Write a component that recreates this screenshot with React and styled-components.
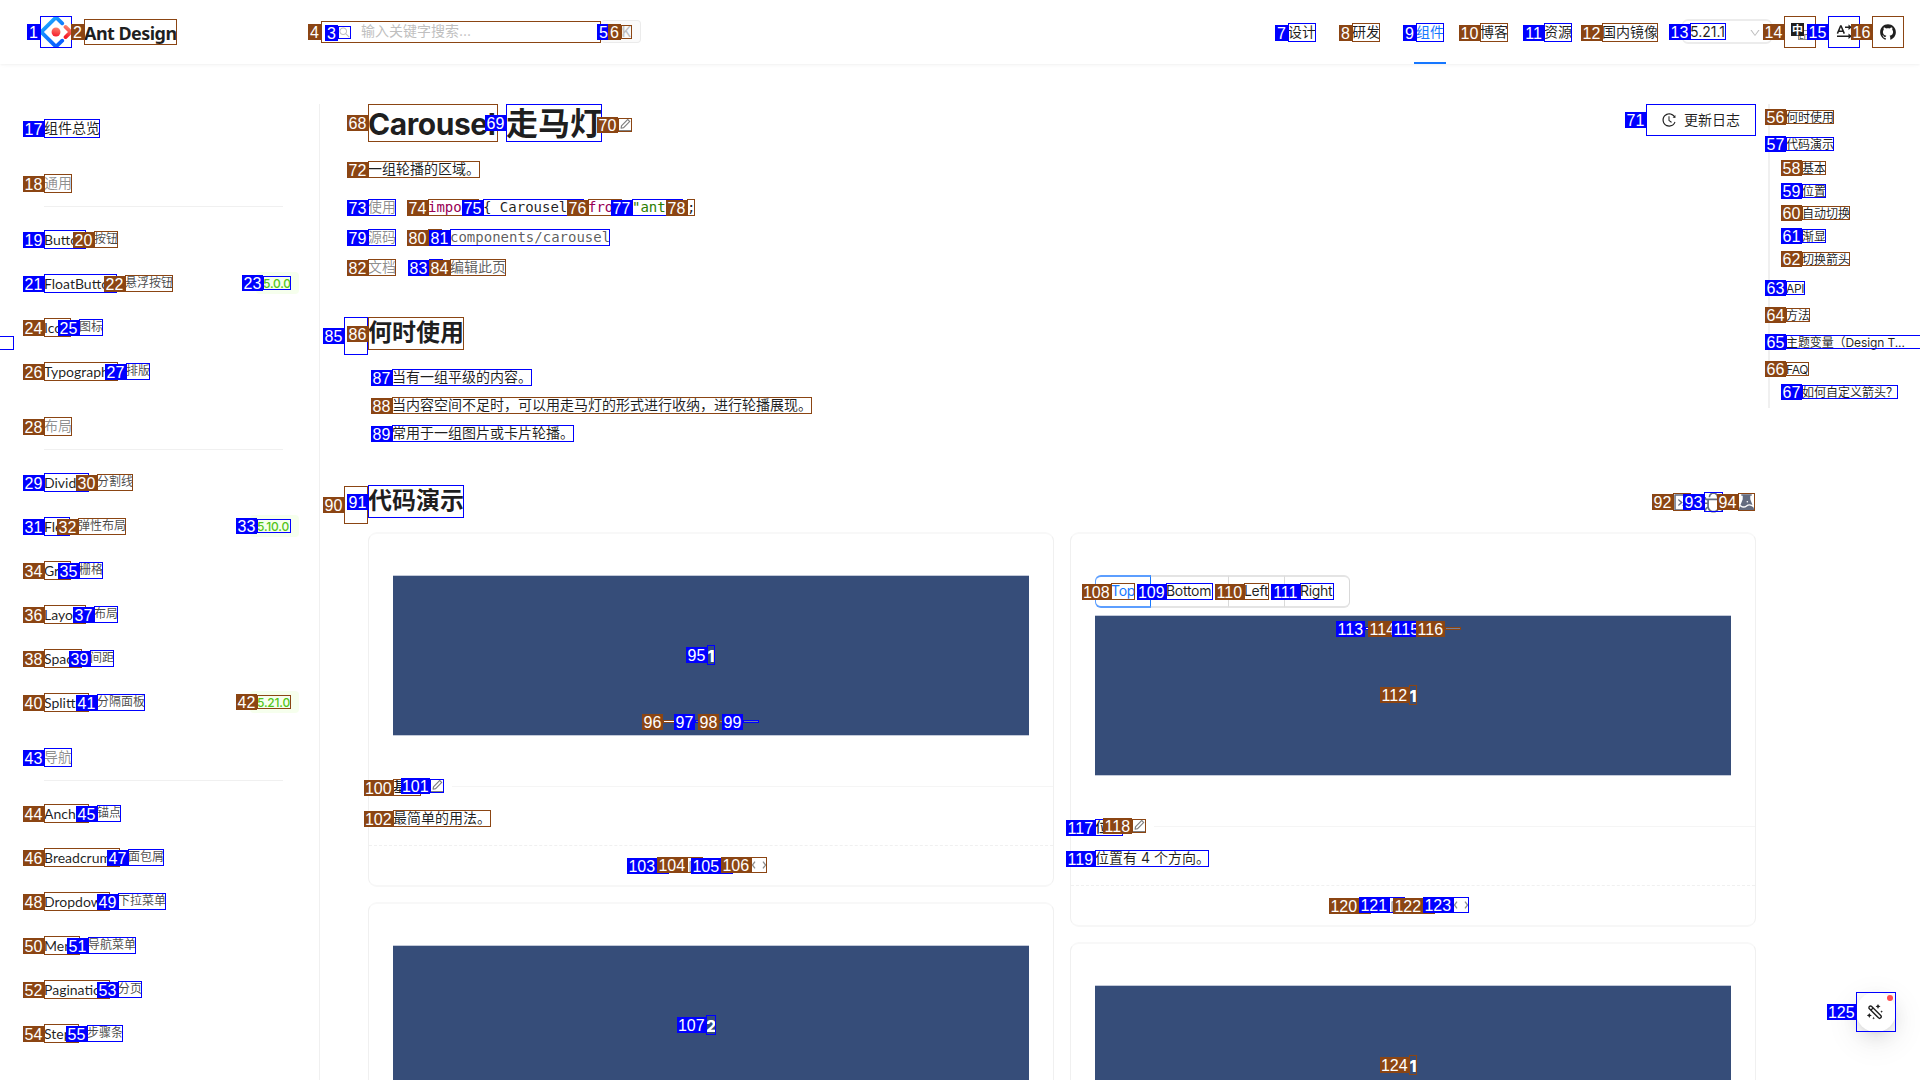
import React from "react";
import styled, { createGlobalStyle, css } from "styled-components";
import {
  AiOutlineSearch,
  AiOutlineDown,
  AiOutlineEdit,
  AiOutlineHistory,
  AiOutlineCode,
  AiOutlineBug,
  AiFillExperiment,
  AiFillGithub,
  AiOutlineGithub,
  AiOutlineCodeSandbox,
  AiOutlineThunderbolt,
  AiOutlineSnippets,
} from "react-icons/ai";

const BLUE = "#0000ff";
const BROWN = "#8b4513";
const SANS = '"Inter", "Noto Sans CJK SC", sans-serif';
const LATO = '"Lato", "Noto Sans CJK SC", sans-serif';
const MONO = '"DejaVu Sans Mono", "Liberation Mono", monospace';

const Global = createGlobalStyle`
  * { box-sizing: border-box; }
  html, body { margin: 0; background: #fff; overflow: hidden; }
  body { font-family: ${SANS}; font-size: 14px; color: rgba(0, 0, 0, 0.88); }
  svg { display: block; flex: none; }
`;

/* ---------- numbered element marks ---------- */

const MarkBox = styled.span`
  position: relative;
  display: flex;
  flex: none;
  align-items: center;
  justify-content: ${(p) => (p.$center ? "center" : "flex-start")};
  width: ${(p) => p.$w}px;
  height: ${(p) => p.$h}px;
  padding-bottom: ${(p) => (p.$lift ? 2 : 0)}px;
  white-space: nowrap;
  line-height: 1;
  &::after {
    content: "";
    position: absolute;
    inset: 0;
    border: 1px solid ${(p) => p.$color};
  }
`;

const MarkTag = styled.span`
  position: absolute;
  right: 100%;
  top: ${(p) => p.$top}px;
  width: ${(p) => p.$w}px;
  height: 16px;
  background: ${(p) => p.$color};
  color: #fff;
  font: 400 16px/17px "Liberation Sans", Arial, sans-serif;
  letter-spacing: 0;
  text-align: center;
`;

const TAG_WIDTH = { 1: 13, 2: 21, 3: 29.4 };

const isLifted = (text, h) =>
  typeof text === "string" && (h === 17 || h === 33 || (h === 19 && !/^[A-Z]/.test(text)));

function Mark({ n, w, h, center, children, className }) {
  const color = n % 2 ? BLUE : BROWN;
  return (
    <MarkBox $w={w} $h={h} $color={color} $center={center} $lift={isLifted(children, h)} className={className}>
      {children}
      <MarkTag $color={color} $top={Math.ceil(h / 2 - 8)} $w={TAG_WIDTH[String(n).length]}>
        {n}
      </MarkTag>
    </MarkBox>
  );
}

/* ---------- header ---------- */

const Header = styled.header`
  display: flex;
  align-items: flex-start;
  width: 1920px;
  height: 64px;
  padding: 0 16px 0 40px;
  box-shadow: 0 1px 2px 0 rgba(0, 0, 0, 0.03), 0 1px 6px -1px rgba(0, 0, 0, 0.02),
    0 2px 4px 0 rgba(0, 0, 0, 0.02);
`;

const Brand = styled.div`
  display: flex;
  gap: 12px;
  width: 281px;
  padding-top: 16px;
`;

const BrandName = styled(Mark)`
  margin-top: 3px;
  padding-top: 2px;
  font: 700 18px/26px "Noto Sans", sans-serif;
  letter-spacing: -0.55px;
`;

const Search = styled(Mark)`
  margin-top: 21px;
  padding-left: 17px;
  color: #bfbfbf;
`;

const Hint = styled.span`
  margin: -2px 0 0 10px;
`;

const Keys = styled.div`
  display: flex;
  align-items: flex-start;
  width: 40px;
  height: 23px;
  margin-top: 20px;
  padding: 4px 0 0 9px;
  border: solid #ebebeb;
  border-width: 1px 1px 1px 0;
  border-radius: 4px;
  background: #fafafa;
  color: #bfbfbf;
  font-size: 14px;
`;

const Nav = styled.nav`
  display: flex;
  gap: 36px;
  margin-left: auto;
  height: 64px;
  padding-top: 23px;
`;

const NavItem = styled.div`
  position: relative;
  color: ${(p) => (p.$active ? "#1677ff" : "rgba(0,0,0,0.88)")};
  margin-left: ${(p) => p.$shift || 0}px;
  ${(p) =>
    p.$active &&
    css`
      &::after {
        content: "";
        position: absolute;
        left: -2px;
        right: -2px;
        bottom: 0;
        height: 2px;
        background: #1677ff;
      }
    `}
`;

const VersionSelect = styled.div`
  display: flex;
  justify-content: space-between;
  width: 90px;
  height: 25px;
  margin: 19px 12px 0 24px;
  padding: 2px 9px 0 7px;
  border: 2px solid #ececec;
  border-left-width: 1px;
  border-right-width: 1px;
  border-radius: 6px;
  color: #bfbfbf;
  svg { margin: 4px 1px 0 0; }
`;

const VersionText = styled(Mark)`
  padding-bottom: 0;
  color: rgba(0, 0, 0, 0.88);
  letter-spacing: 0;
`;

const HeaderIcons = styled.div`
  display: flex;
  gap: 12px;
  padding-top: 16px;
`;

/* ---------- body / sidebar ---------- */

const Body = styled.div`
  display: flex;
  align-items: flex-start;
  width: 1920px;
  height: 1016px;
  padding-top: 40px;
  overflow: hidden;
`;

const Sidebar = styled.aside`
  width: 320px;
  height: 976px;
  flex: none;
  padding: 2px 20px 0 44px;
  border-right: 1px solid #f0f0f0;
`;

const Row = styled.div`
  display: flex;
  align-items: flex-start;
  height: 44px;
  padding-top: 13px;
  font-family: ${LATO};
`;

const CnName = styled(Mark)`
  margin: 1px 0 0 8px;
  font-size: 12px;
  color: rgba(0, 0, 0, 0.72);
`;

const VersionBadge = styled.span`
  display: flex;
  height: 22px;
  margin: -2px 0 0 auto;
  padding: 4px 8px 0 7px;
  border-radius: 4px;
  background: #f6ffed;
  color: #52c41a;
  font: 500 12px/14px ${SANS};
  letter-spacing: -0.2px;
`;

const BadgeMark = styled(Mark)`
  padding-top: 1px;
`;

const Group = styled.div`
  height: 67px;
  padding: 24px 16px 0 0;
  color: rgba(0, 0, 0, 0.45);
`;

const GroupRule = styled.div`
  height: 1px;
  margin-top: 13px;
  background: #f0f0f0;
`;

const EdgeMark = styled.div`
  position: absolute;
  left: -2px;
  top: 336px;
  width: 16px;
  height: 14px;
  border: 1px solid ${BLUE};
`;

/* ---------- main column ---------- */

const Main = styled.main`
  width: 1388px;
  margin-left: 48px;
  flex: none;
`;

const TitleRow = styled.div`
  display: flex;
  align-items: flex-start;
  height: 57px;
`;

const TitleEn = styled(Mark)`
  margin-right: 8px;
  padding-top: 2px;
  font-size: 30px;
  font-weight: 700;
  letter-spacing: -0.45px;
`;

const TitleCn = styled(Mark)`
  margin-right: 16px;
  padding-top: 1px;
  font-size: 32px;
  font-weight: 600;
`;

const PencilSlot = styled.div`
  display: flex;
  padding-top: ${(p) => p.$top || 0}px;
  margin-left: ${(p) => p.$left || 0}px;
  color: rgba(0, 0, 0, 0.5);
`;

const LogButton = styled(Mark)`
  margin-left: auto;
  padding-left: 15px;
  gap: 7px;
  border-radius: 6px;
  background: #fff;
`;

const Intro = styled.div`
  display: flex;
  height: 38px;
`;

const Meta = styled.div`
  display: flex;
  height: 30px;
  color: ${(p) => (p.$link ? "rgba(0,0,0,0.65)" : "rgba(0,0,0,0.88)")};
`;

const MetaLabel = styled(Mark)`
  margin-right: 32px;
  color: rgba(0, 0, 0, 0.45);
`;

const CodeSlot = styled.span`
  display: flex;
  height: 17px;
  margin-left: ${(p) => p.$ml || 0}px;
  font-family: ${MONO};
  font-size: 14px;
  color: ${(p) => p.$ink || "inherit"};
`;

const LinkSlot = styled.span`
  display: flex;
  height: 17px;
  margin-left: ${(p) => p.$ml}px;
`;

const Section = styled.div`
  display: flex;
  align-items: flex-start;
  height: ${(p) => p.$h}px;
  margin: ${(p) => p.$mt}px 0 0 -24px;
`;

const SectionTitle = styled(Mark)`
  font-size: 24px;
  font-weight: 600;
`;

const Bullet = styled.div`
  display: flex;
  height: 28px;
  padding-left: 24px;
`;

const Tools = styled.div`
  display: flex;
  align-items: flex-start;
  margin-left: auto;
  padding: 7px 1px 0 0;
  color: #646c80;
`;

const ToolSlot = styled.div`
  display: flex;
  margin: ${(p) => p.$mt || 0}px 0 0 ${(p) => p.$ml || 0}px;
`;

const Columns = styled.div`
  display: grid;
  grid-template-columns: 686px 686px;
  gap: 16px;
`;

const Column = styled.div`
  display: flex;
  flex-direction: column;
  gap: 15px;
`;

const Card = styled.section`
  border: solid #f0f0f0;
  border-width: 2px 1px;
  border-top-color: #f8f8f8;
  border-bottom-color: #f7f7f7;
  border-radius: 9px;
  height: ${(p) => p.$h}px;
  padding-top: 41px;
`;

const Slide = styled.div`
  display: flex;
  flex-direction: column;
  align-items: center;
  height: 161px;
  margin: 0 24px;
  border: solid #c3cad9;
  border-width: 1px 0;
  background: #364d79;
  padding-top: ${(p) => p.$pt}px;
  color: #fff;
`;

const SlideNumber = styled(Mark)`
  font-size: 16px;
  font-weight: 800;
  padding-top: 2px;
`;

const Dots = styled.div`
  display: flex;
  gap: 8px;
  margin: ${(p) => p.$m};
`;

const Dot = styled.span`
  width: 100%;
  height: 3px;
  background: ${(p) => (p.$on ? "#fff" : "rgba(255,255,255,0.3)")};
`;

const Caption = styled.div`
  display: flex;
  align-items: flex-start;
  height: 31px;
  padding-left: 24px;
  margin-top: 43px;
  font-weight: 500;
`;

const CaptionRule = styled.div`
  flex: 1;
  height: 1px;
  margin: 7px 0 0 8px;
  background: #f5f5f5;
`;

const Description = styled.div`
  display: flex;
  height: 36px;
  padding-left: 24px;
  border-bottom: 1px dashed #f0f0f0;
`;

const Actions = styled.div`
  display: flex;
  justify-content: center;
  gap: 18px;
  padding: 11px 0 0 1px;
  color: rgba(0, 0, 0, 0.45);
`;

const ActionSlot = styled.div`
  display: flex;
  margin-top: ${(p) => (p.$small ? 1 : 0)}px;
`;

const Radios = styled.div`
  display: flex;
  width: 256px;
  height: 33px;
  margin: 0 0 7px 24px;
`;

const Radio = styled.div`
  flex: none;
  width: ${(p) => p.$w}px;
  padding: 6px 0 0 15px;
  border: solid ${(p) => (p.$on ? "#5c9eff" : "#e4e4e4")};
  border-width: 2px 1px 2px ${(p) => (p.$on ? 1 : 0)}px;
  border-right-color: ${(p) => (p.$on ? "#1677ff" : "#d9d9d9")};
  border-radius: ${(p) => (p.$on ? "6px 0 0 6px" : p.$last ? "0 6px 6px 0" : 0)};
  color: ${(p) => (p.$on ? "#1677ff" : "inherit")};
  letter-spacing: -0.3px;
`;

/* ---------- anchor column ---------- */

const Anchor = styled.aside`
  flex: none;
  width: 152px;
  height: 304px;
  margin-left: 12px;
  border-left: 2px solid #f0f0f0;
  padding-left: 16px;
  display: flex;
  flex-direction: column;
  align-items: flex-start;
  font-size: 12px;
`;

const AnchorSlot = styled.div`
  display: flex;
  margin-top: ${(p) => p.$mt}px;
  margin-left: ${(p) => (p.$nested ? 16 : 0)}px;
  letter-spacing: ${(p) => p.$ls || 0}px;
`;

const AnchorMark = styled(Mark)`
  padding-top: 1px;
`;

const Float = styled.div`
  position: absolute;
  left: 1856px;
  top: 992px;
  width: 40px;
  height: 40px;
  border-radius: 50%;
  background: #fff;
  box-shadow: 0 6px 16px 0 rgba(0, 0, 0, 0.08), 0 3px 6px -4px rgba(0, 0, 0, 0.12),
    0 9px 28px 8px rgba(0, 0, 0, 0.05);
`;

const RedDot = styled.i`
  position: absolute;
  left: 31px;
  top: 3px;
  width: 6px;
  height: 6px;
  border-radius: 50%;
  background: #ff4d4f;
`;

/* ---------- drawings ---------- */

const Logo = () => (
  <svg width="32" height="32" viewBox="1.6 1.6 28.8 28.8" fill="none">
    <defs>
      <linearGradient id="ring" x1="0" y1="0" x2="0.6" y2="1">
        <stop offset="0" stopColor="#29cdff" />
        <stop offset="0.4" stopColor="#148eff" />
        <stop offset="1" stopColor="#0a60ff" />
      </linearGradient>
      <linearGradient id="red" x1="0.6" y1="0" x2="0.4" y2="1">
        <stop offset="0" stopColor="#fa816e" />
        <stop offset="1" stopColor="#f51d2c" />
      </linearGradient>
    </defs>
    <path
      d="M21.6 8.2 17.2 3.9Q16 2.7 14.8 3.9L3.9 14.8Q2.7 16 3.9 17.2L14.8 28.1Q16 29.3 17.2 28.1L21.6 23.8"
      stroke="url(#ring)"
      strokeWidth="3.4"
      strokeLinecap="round"
    />
    <path d="M24.6 11.4 28.2 15Q29.1 16 28.2 17L24.6 20.6" stroke="url(#red)" strokeWidth="3.4" strokeLinecap="round" />
    <circle cx="16" cy="16" r="4" fill="url(#red)" />
  </svg>
);

const LangIcon = () => (
  <svg width="20" height="20" viewBox="0 0 20 20" overflow="visible">
    <rect x="8.5" y="8.5" width="10" height="9" fill="#fff" stroke="#8c8c8c" />
    <text x="9" y="16.5" fontSize="8" fontFamily="Inter, sans-serif" fill="#444">En</text>
    <rect x="1" y="1" width="13" height="13" fill="#1f1f1f" />
    <text x="2" y="11.6" fontSize="11" fontWeight="700" fontFamily="Noto Sans CJK SC, sans-serif" fill="#fff">中</text>
  </svg>
);

const DirectionIcon = () => (
  <svg width="20" height="20" viewBox="0 0 20 20" fill="none" stroke="#1f1f1f" strokeWidth="1.5">
    <path d="M3.4 11.6 6.6 4h.5l3.2 7.6M4.6 9.2h4.6" />
    <path d="M11 5.2h5M3 14.2h14" />
    <path d="M14.5 2.4 17.8 5.2l-3.3 2.8zM14.5 11.4l3.3 2.8-3.3 2.8z" fill="#1f1f1f" stroke="none" />
  </svg>
);

const CodeIcon = () => (
  <svg width="16" height="16" viewBox="0 0 16 16" fill="none" stroke="currentColor" strokeWidth="1.3">
    <path d="M4 4.6 1.4 8 4 11.4M12 4.6 14.6 8 12 11.4" />
  </svg>
);

const WandIcon = () => (
  <svg width="18" height="18" viewBox="1 0 18 18">
    <g transform="rotate(45 9 9)">
      <rect x="1.2" y="7.5" width="16" height="3.2" rx="1.6" fill="none" stroke="#1f1f1f" strokeWidth="1.4" />
      <path d="M4.8 7.5v3.2" stroke="#1f1f1f" strokeWidth="1.2" />
    </g>
    <path d="m12 1 .8 1.6 1.7.8-1.7.8-.8 1.7-.8-1.7-1.6-.8 1.6-.8zM3.3 10l.8 1.6 1.7.8-1.7.8-.8 1.7-.8-1.7-1.6-.8 1.6-.8z" fill="#1f1f1f" />
    <path d="m15.6 7.2.4 1 1 .4-1 .4-.4 1-.4-1-1-.4 1-.4zM7.6 13.8l.4 1 1 .4-1 .4-.4 1-.4-1-1-.4 1-.4z" fill="#1f1f1f" />
  </svg>
);

const Overflowing = styled.span`
  display: flex;
  margin: 0 -${(p) => p.$by}px;
`;

const Pencil = () => (
  <Overflowing $by={1}>
    <AiOutlineEdit size={16} />
  </Overflowing>
);

/* ---------- data ---------- */

const menu = [
  { n: 17, name: "组件总览", w: 56 },
  { group: "通用", n: 18 },
  { n: 19, name: "Button", w: 42, cn: "按钮" },
  { n: 21, name: "FloatButton", w: 73, cn: "悬浮按钮", tag: "5.0.0" },
  { n: 24, name: "Icon", w: 27, cn: "图标" },
  { n: 26, name: "Typography", w: 74, cn: "排版" },
  { group: "布局", n: 28 },
  { n: 29, name: "Divider", w: 45, cn: "分割线" },
  { n: 31, name: "Flex", w: 26, cn: "弹性布局", tag: "5.10.0" },
  { n: 34, name: "Grid", w: 27, cn: "栅格" },
  { n: 36, name: "Layout", w: 42, cn: "布局" },
  { n: 38, name: "Space", w: 38, cn: "间距" },
  { n: 40, name: "Splitter", w: 45, cn: "分隔面板", tag: "5.21.0" },
  { group: "导航", n: 43 },
  { n: 44, name: "Anchor", w: 45, cn: "锚点" },
  { n: 46, name: "Breadcrumb", w: 76, cn: "面包屑" },
  { n: 48, name: "Dropdown", w: 66, cn: "下拉菜单" },
  { n: 50, name: "Menu", w: 36, cn: "导航菜单" },
  { n: 52, name: "Pagination", w: 66, cn: "分页" },
  { n: 54, name: "Steps", w: 35, cn: "步骤条" },
];

const nav = [
  [7, "设计", 28],
  [8, "研发", 28],
  [9, "组件", 28],
  [10, "博客", 28],
  [11, "资源", 28],
  [12, "国内镜像", 56],
];

const anchors = [
  [56, "何时使用", 48, 6],
  [57, "代码演示", 48, 13],
  [58, "基本", 24, 10, true],
  [59, "位置", 24, 9, true],
  [60, "自动切换", 48, 8, true],
  [61, "渐显", 24, 9, true],
  [62, "切换箭头", 48, 9, true],
  [63, "API", 19, 15, false, -0.3],
  [64, "方法", 24, 13],
  [65, "主题变量（Design T...", 140, 13, false, -0.1],
  [66, "FAQ", 23, 13, false, -0.3],
  [67, "如何自定义箭头？", 96, 9, true],
];

function DotRow({ start, margin }) {
  return (
    <Dots $m={margin}>
      {[0, 1, 2, 3].map((i) => (
        <Mark key={i} n={start + i} w={i === 0 ? 24 : 16} h={3}>
          <Dot $on={i === 0} />
        </Mark>
      ))}
    </Dots>
  );
}

function CardFooter({ start, title, text, textWidth, actions }) {
  return (
    <>
      <Caption>
        <Mark n={start} w={28} h={17}>{title}</Mark>
        <PencilSlot $left={9}>
          <Mark n={start + 1} w={14} h={14}><Pencil /></Mark>
        </PencilSlot>
        <CaptionRule />
      </Caption>
      <Description>
        <Mark n={start + 2} w={textWidth} h={17}>{text}</Mark>
      </Description>
      <Actions>
        <ActionSlot $small><Mark n={actions} w={12} h={16}><AiOutlineCodeSandbox size={12} /></Mark></ActionSlot>
        <ActionSlot><Mark n={actions + 1} w={16} h={16}><AiOutlineSnippets size={16} /></Mark></ActionSlot>
        <ActionSlot $small><Mark n={actions + 2} w={12} h={16}><AiOutlineThunderbolt size={12} /></Mark></ActionSlot>
        <ActionSlot><Mark n={actions + 3} w={16} h={16}><CodeIcon /></Mark></ActionSlot>
      </Actions>
    </>
  );
}

export default function App() {
  return (
    <>
      <Global />
      <Header>
        <Brand>
          <Mark n={1} w={32} h={32}><Logo /></Mark>
          <BrandName n={2} w={93} h={26}>Ant Design</BrandName>
        </Brand>
        <Search n={4} w={280} h={22}>
          <Mark n={3} w={13} h={13}><AiOutlineSearch size={13} /></Mark>
          <Hint>输入关键字搜索...</Hint>
        </Search>
        <Keys>
          <Mark n={5} w={11} h={14}>⌘</Mark>
          <Mark n={6} w={11} h={14} center>K</Mark>
        </Keys>
        <Nav>
          {nav.map(([n, text, w]) => (
            <NavItem key={n} $active={n === 9} $shift={n === 12 ? -6 : 0}>
              <Mark n={n} w={w} h={19}>{text}</Mark>
            </NavItem>
          ))}
        </Nav>
        <VersionSelect>
          <VersionText n={13} w={36} h={17}>5.21.1</VersionText>
          <AiOutlineDown size={12} />
        </VersionSelect>
        <HeaderIcons>
          <Mark n={14} w={32} h={32} center><LangIcon /></Mark>
          <Mark n={15} w={32} h={32} center><DirectionIcon /></Mark>
          <Mark n={16} w={32} h={32} center><AiOutlineGithub size={18} /></Mark>
        </HeaderIcons>
      </Header>

      <Body>
        <Sidebar>
          {menu.map((m) =>
            m.group ? (
              <Group key={m.n}>
                <Mark n={m.n} w={28} h={19}>{m.group}</Mark>
                <GroupRule />
              </Group>
            ) : (
              <Row key={m.n}>
                <Mark n={m.n} w={m.w} h={19}>{m.name}</Mark>
                {m.cn && <CnName n={m.n + 1} w={m.cn.length * 12} h={17}>{m.cn}</CnName>}
                {m.tag && (
                  <VersionBadge>
                    <BadgeMark n={m.n + 2} w={m.tag.length === 5 ? 28 : 34} h={14}>{m.tag}</BadgeMark>
                  </VersionBadge>
                )}
              </Row>
            )
          )}
        </Sidebar>

        <Main>
          <TitleRow>
            <TitleEn n={68} w={130} h={38}>Carousel</TitleEn>
            <TitleCn n={69} w={96} h={38}>走马灯</TitleCn>
            <PencilSlot $top={14}>
              <Mark n={70} w={14} h={14}><Pencil /></Mark>
            </PencilSlot>
            <LogButton n={71} w={110} h={32}>
              <AiOutlineHistory size={16} />
              更新日志
            </LogButton>
          </TitleRow>
          <Intro>
            <Mark n={72} w={112} h={17}>一组轮播的区域。</Mark>
          </Intro>
          <Meta>
            <MetaLabel n={73} w={28} h={17}>使用</MetaLabel>
            <CodeSlot $ink="#905"><Mark n={74} w={51} h={17}>import</Mark></CodeSlot>
            <CodeSlot $ml={4}><Mark n={75} w={101} h={17}>{"{ Carousel }"}</Mark></CodeSlot>
            <CodeSlot $ml={4} $ink="#905"><Mark n={76} w={34} h={17}>from</Mark></CodeSlot>
            <CodeSlot $ml={10} $ink="#2a7d00"><Mark n={77} w={51} h={17}>"antd"</Mark></CodeSlot>
            <CodeSlot $ml={4}><Mark n={78} w={8} h={17}>;</Mark></CodeSlot>
          </Meta>
          <Meta $link>
            <MetaLabel n={79} w={28} h={17}>源码</MetaLabel>
            <Mark n={80} w={14} h={17}><AiFillGithub size={14} /></Mark>
            <CodeSlot $ml={8}><Mark n={81} w={160} h={17}>components/carousel</Mark></CodeSlot>
          </Meta>
          <Meta $link>
            <MetaLabel n={82} w={28} h={17}>文档</MetaLabel>
            <LinkSlot $ml={1}><Mark n={83} w={14} h={17}><AiOutlineEdit size={14} /></Mark></LinkSlot>
            <LinkSlot $ml={7}><Mark n={84} w={56} h={17}>编辑此页</Mark></LinkSlot>
          </Meta>

          <Section $h={52} $mt={28}>
            <Mark n={85} w={24} h={38} />
            <SectionTitle n={86} w={96} h={33}>何时使用</SectionTitle>
          </Section>
          <Bullet><Mark n={87} w={140} h={17}>当有一组平级的内容。</Mark></Bullet>
          <Bullet>
            <Mark n={88} w={420} h={17}>当内容空间不足时，可以用走马灯的形式进行收纳，进行轮播展现。</Mark>
          </Bullet>
          <Bullet><Mark n={89} w={182} h={17}>常用于一组图片或卡片轮播。</Mark></Bullet>

          <Section $h={47} $mt={32}>
            <ToolSlot $mt={1}><Mark n={90} w={24} h={38} /></ToolSlot>
            <SectionTitle n={91} w={96} h={33}>代码演示</SectionTitle>
            <Tools>
              <ToolSlot $mt={1}>
                <Mark n={92} w={18} h={18} center><AiOutlineCode size={21} /></Mark>
              </ToolSlot>
              <ToolSlot $ml={13}>
                <Mark n={93} w={19} h={20} center><AiOutlineBug size={23} /></Mark>
              </ToolSlot>
              <ToolSlot $ml={15} $mt={1}>
                <Mark n={94} w={17} h={18} center><AiFillExperiment size={21} /></Mark>
              </ToolSlot>
            </Tools>
          </Section>

          <Columns>
            <Column>
              <Card $h={355}>
                <Slide $pt={69}>
                  <SlideNumber n={95} w={8} h={20} center>1</SlideNumber>
                  <DotRow start={96} margin="55px 0 0" />
                </Slide>
                <CardFooter start={100} title="基本" text="最简单的用法。" textWidth={98} actions={103} />
              </Card>
              <Card $h={355}>
                <Slide $pt={69}>
                  <SlideNumber n={107} w={10} h={20} center>2</SlideNumber>
                </Slide>
              </Card>
            </Column>
            <Column>
              <Card $h={395}>
                <Radios>
                  <Radio $w={56} $on><Mark n={108} w={24} h={17}>Top</Mark></Radio>
                  <Radio $w={78}><Mark n={109} w={47} h={17}>Bottom</Mark></Radio>
                  <Radio $w={56}><Mark n={110} w={25} h={17}>Left</Mark></Radio>
                  <Radio $w={65} $last><Mark n={111} w={34} h={17}>Right</Mark></Radio>
                </Radios>
                <Slide $pt={11}>
                  <DotRow start={113} margin="0 0 55px" />
                  <SlideNumber n={112} w={8} h={20} center>1</SlideNumber>
                </Slide>
                <CardFooter start={117} title="位置" text="位置有 4 个方向。" textWidth={114} actions={120} />
              </Card>
              <Card $h={395}>
                <Slide $pt={69}>
                  <SlideNumber n={124} w={8} h={20} center>1</SlideNumber>
                </Slide>
              </Card>
            </Column>
          </Columns>
        </Main>

        <Anchor>
          {anchors.map(([n, text, w, mt, nested, ls]) => (
            <AnchorSlot key={n} $mt={mt} $nested={nested} $ls={ls}>
              <AnchorMark n={n} w={w} h={14}>{text}</AnchorMark>
            </AnchorSlot>
          ))}
        </Anchor>
      </Body>

      <EdgeMark />
      <Float>
        <Mark n={125} w={40} h={40} center><WandIcon /></Mark>
        <RedDot />
      </Float>
    </>
  );
}
